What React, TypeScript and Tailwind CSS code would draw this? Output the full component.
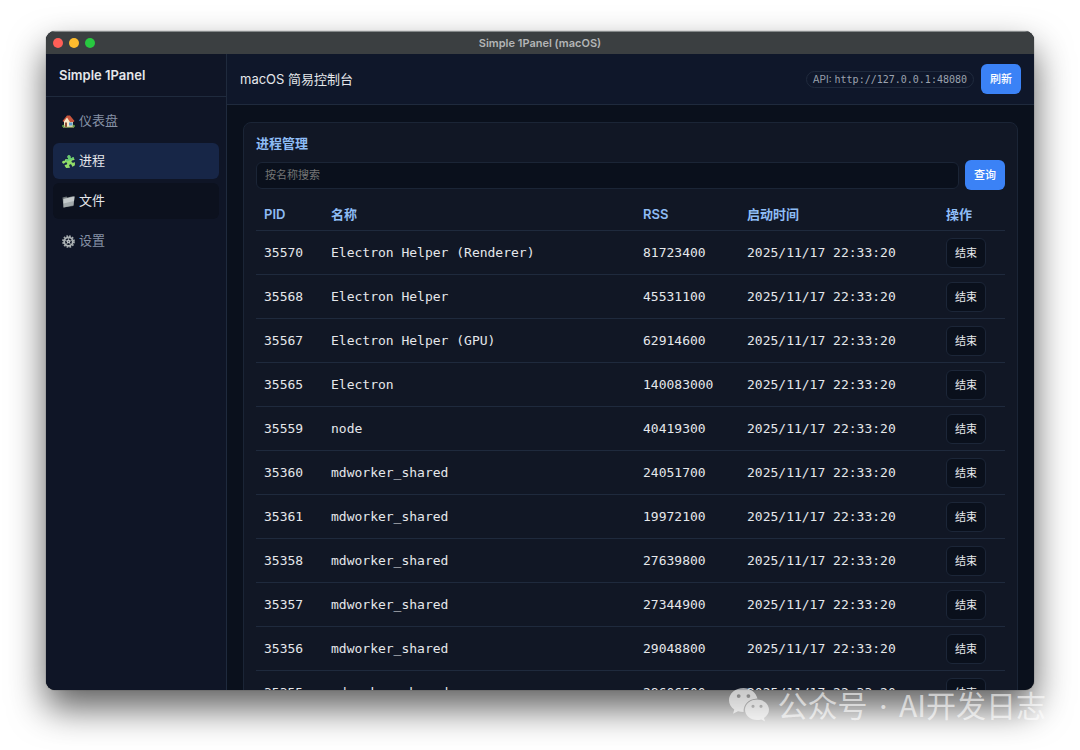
import { useState } from 'react'

interface Process {
  pid: number
  name: string
  rss: number
}

const STARTED_AT = '2025/11/17 22:33:20'

const PROCESSES: Process[] = [
  { pid: 35570, name: 'Electron Helper (Renderer)', rss: 81723400 },
  { pid: 35568, name: 'Electron Helper', rss: 45531100 },
  { pid: 35567, name: 'Electron Helper (GPU)', rss: 62914600 },
  { pid: 35565, name: 'Electron', rss: 140083000 },
  { pid: 35559, name: 'node', rss: 40419300 },
  { pid: 35360, name: 'mdworker_shared', rss: 24051700 },
  { pid: 35361, name: 'mdworker_shared', rss: 19972100 },
  { pid: 35358, name: 'mdworker_shared', rss: 27639800 },
  { pid: 35357, name: 'mdworker_shared', rss: 27344900 },
  { pid: 35356, name: 'mdworker_shared', rss: 29048800 },
  { pid: 35355, name: 'mdworker_shared', rss: 28606500 }
]

function HouseIcon() {
  return (
    <svg className="w-[13px] h-[13px] shrink-0" viewBox="0 0 26 26" aria-hidden="true">
      <path d="M4 11 11 3l11 8v13H4z" fill="#f0dcb8" />
      <path d="M4 12 10 4l4 8v12H4z" fill="#f8e8c8" />
      <path d="M10 1h6l9 11-2 2h-7L10 5 3 14l-2-2z" fill="#c9553c" />
      <rect x="6" y="15" width="4" height="9" fill="#8a4a31" />
      <rect x="14" y="15" width="7" height="6" fill="#5b9cc9" />
      <circle cx="2.500" cy="22" r="2.500" fill="#5c9444" />
      <circle cx="23.500" cy="22" r="2.500" fill="#5c9444" />
      <path d="M2 24.500h22" stroke="#8aa05a" strokeWidth="2" />
    </svg>
  )
}

function PuzzleIcon() {
  return (
    <svg className="w-[13px] h-[13px] shrink-0" viewBox="0 0 26 26" aria-hidden="true">
      <g transform="rotate(-18 13 13)">
        <path
          d="M9 6.500 14 9c1.200-.6 0-2-.2-3.500C13.500 3 15 1 17.200 1.200c2.300.2 3.300 2.600 2.300 4.800-.5 1.200-.8 2.500.5 2.500L25 7.500l.8 5.500c-1 1.300-2.300.4-3.800.2-2.200-.2-3.500 1-3.300 2.800.2 2 2.300 2.800 4 2 1-.4 1.800 0 1.800 1L23 24l-5.500 1.500c-1.300-.7-.5-2-.7-3.500-.3-2-2-3-3.800-2.300-1.800.8-1.800 2.800-.8 4.300.5 1 0 1.700-1 1.700L4.500 24 3 18.500c.5-1.200 2-.6 3.500-.6 2 0 3.200-1.500 2.800-3.200-.5-1.900-2.600-2.300-4.300-1.200C3 14.800.5 14 .3 11.700.1 9.500 2 8.300 4 8.700c1.500.3 3 .5 3.500-.7z"
          fill="#92dc68"
        />
        <path d="M9 6.500 14 9c1.200-.6 0-2-.2-3.500C13.500 3 15 1 17.200 1.200c2.300.2 3.300 2.600 2.300 4.800-.5 1.200-.8 2.500.5 2.500L25 7.500l.5 3C19 11 14 12 9 12z" fill="#66cb74" />
      </g>
    </svg>
  )
}

function FolderIcon() {
  return (
    <svg className="w-[13px] h-[13px] shrink-0" viewBox="0 0 26 26" aria-hidden="true">
      <path d="M1 5 9 3l2 2L23 2v20L3 25z" fill="#6f7679" />
      <path d="M3 8 25 3l-2 17.500L3 25z" fill="#a3aaac" />
      <path d="M3 8 25 3l-1 9-21 5z" fill="#c3c9ca" />
    </svg>
  )
}

function GearIcon() {
  return (
    <svg className="w-[13px] h-[13px] shrink-0" viewBox="0 0 26 26" fill="none" aria-hidden="true">
      <circle cx="13" cy="13" r="11" stroke="#a5abad" strokeWidth="3.500" strokeDasharray="3.450 2.310" />
      <circle cx="13" cy="13" r="8.500" stroke="#b0b6b8" strokeWidth="3.500" />
      <path d="M13 13 13 5M13 13l7.600-2.500M13 13l4.700 6.500M13 13l-4.700 6.500M13 13l-7.600-2.500" stroke="#8f9597" strokeWidth="2.500" />
      <circle cx="13" cy="13" r="3.500" fill="#c6cbcd" />
      <circle cx="13" cy="13" r="1.500" fill="#5b6170" />
    </svg>
  )
}

function WeChatLogo() {
  return (
    <svg className="w-10 h-[34px] shrink-0" viewBox="0 0 40 34" fill="currentColor" aria-hidden="true">
      <path
        fillRule="evenodd"
        d="M14.500 0C6.500 0 0 5.400 0 12.200c0 3.800 2.100 7.200 5.300 9.400L4 25.800l5-2.500c1.700.5 3.600.8 5.600.8C14 17 19.500 11 28.500 10.600 27 4.500 21.300 0 14.500 0ZM9.700 6.200a1.900 1.900 0 1 1 0 3.800 1.900 1.900 0 0 1 0-3.800Zm9.700 0a1.900 1.900 0 1 1 0 3.800 1.900 1.900 0 0 1 0-3.800Z"
      />
      <path
        fillRule="evenodd"
        d="M28 11.500c-6.700 0-12 4.600-12 10.300S21.300 32 28 32c1.500 0 2.900-.2 4.200-.6L36 33.400l-1-3.500c3-1.900 5-4.800 5-8.100 0-5.700-5.300-10.300-12-10.300Zm-4 5.200a1.600 1.600 0 1 1 0 3.200 1.600 1.600 0 0 1 0-3.200Zm8 0a1.600 1.600 0 1 1 0 3.200 1.600 1.600 0 0 1 0-3.200Z"
      />
    </svg>
  )
}

const NAV_ITEMS = [
  { id: 'dashboard', label: '仪表盘', icon: <HouseIcon /> },
  { id: 'processes', label: '进程', icon: <PuzzleIcon /> },
  { id: 'files', label: '文件', icon: <FolderIcon /> },
  { id: 'settings', label: '设置', icon: <GearIcon /> }
]

function navItemStyle(id: string, active: string) {
  if (id === active) return 'bg-[#172647] text-gray-200'
  if (id === 'files') return 'bg-[#0c111e] text-gray-200'
  return 'text-[#8591a5] hover:bg-[#0c111e] hover:text-gray-200'
}

function Sidebar() {
  const [active, setActive] = useState('processes')

  return (
    <aside className="w-[181px] shrink-0 bg-[#0f1526] border-r border-[#1f2a3d]">
      <div className="h-[43px] px-[13px] pt-0.5 flex items-center border-b border-[#1f2a3d] text-[13px] font-semibold text-gray-200">
        Simple 1Panel
      </div>
      <nav className="flex flex-col gap-1 px-[7px] py-[6px]">
        {NAV_ITEMS.map(item => (
          <button
            key={item.id}
            onClick={() => setActive(item.id)}
            className={`h-9 px-[9px] flex items-center gap-1 rounded-md text-[13px] ${navItemStyle(item.id, active)}`}
          >
            {item.icon}
            {item.label}
          </button>
        ))}
      </nav>
    </aside>
  )
}

function ProcessTable({ rows }: { rows: Process[] }) {
  return (
    <table className="w-full table-fixed text-left text-[13px]">
      <thead>
        <tr className="h-8 border-b border-[#1f2a3d] text-[#8ebcf5]">
          <th className="w-[67px] px-2 pt-0.5 font-semibold">PID</th>
          <th className="px-2 pt-0.5 font-semibold">名称</th>
          <th className="w-[104px] px-2 pt-0.5 font-semibold">RSS</th>
          <th className="w-[199px] px-2 pt-0.5 font-semibold">启动时间</th>
          <th className="w-[67px] px-2 pt-0.5 font-semibold">操作</th>
        </tr>
      </thead>
      <tbody className="font-['DejaVu_Sans_Mono',monospace] text-gray-200">
        {rows.map(row => (
          <tr key={row.pid} className="h-11 border-b border-[#1f2a3d]">
            <td className="px-2 pt-0.5">{row.pid}</td>
            <td className="px-2 pt-0.5 truncate">{row.name}</td>
            <td className="px-2 pt-0.5">{row.rss}</td>
            <td className="px-2 pt-0.5 whitespace-nowrap">{STARTED_AT}</td>
            <td className="px-2 pt-0.5">
              <button className="block w-10 h-[30px] rounded-md border border-[#1c2638] bg-[#0a101c] font-['Inter','Noto_Sans_CJK_SC',sans-serif] text-[11px] text-gray-200">
                结束
              </button>
            </td>
          </tr>
        ))}
      </tbody>
    </table>
  )
}

export default function App() {
  const [keyword, setKeyword] = useState('')
  const [query, setQuery] = useState('')

  const rows = PROCESSES.filter(p => p.name.toLowerCase().includes(query.toLowerCase()))

  return (
    <div className="relative h-screen overflow-hidden bg-white px-[46px] pt-[31px] pb-[60px] font-['Inter','Noto_Sans_CJK_SC',sans-serif]">
      <div className="h-full flex flex-col overflow-hidden rounded-[9px] bg-[#0a101c] shadow-[0_18px_36px_rgba(0,0,0,0.63),0_0_1px_rgba(0,0,0,0.8)]">
        {/* Title bar */}
        <div className="h-[23px] shrink-0 grid grid-cols-[1fr_auto_1fr] items-center px-[7px] bg-[#3b3f41] border-t border-[#85898a]">
          <div className="flex gap-[6px]">
            <span className="size-[10px] rounded-full bg-[#ff5f57]" />
            <span className="size-[10px] rounded-full bg-[#febc2e]" />
            <span className="size-[10px] rounded-full bg-[#28c840]" />
          </div>
          <span className="text-[11px] font-semibold text-[#b3b5b6]">Simple 1Panel (macOS)</span>
        </div>

        <div className="flex flex-1 min-h-0">
          <Sidebar />

          <div className="flex flex-1 min-w-0 flex-col">
            <header className="h-[51px] shrink-0 flex items-center gap-[7px] px-[13px] bg-[#0f172a] border-b border-[#1f2a3d]">
              <h1 className="mr-auto pt-0.5 text-[13px] text-gray-200">macOS 简易控制台</h1>
              <div className="h-[17px] px-[6px] flex items-center gap-[3px] rounded-full border border-[#1f2a3d] text-[10px] text-[#9ca3af]">
                API: <span className="font-['DejaVu_Sans_Mono',monospace]">http://127.0.0.1:48080</span>
              </div>
              <button className="w-10 h-[30px] rounded-md bg-[#3b82f6] text-[11px] font-medium text-white">
                刷新
              </button>
            </header>

            <main className="flex-1 min-h-0 overflow-hidden px-4 pt-[17px]">
              <section className="rounded-lg border border-[#1b2536] bg-[#111725] px-3 pt-[11px] pb-4">
                <h2 className="text-[13px] leading-[18px] font-bold text-[#8ebcf5]">进程管理</h2>
                <form
                  className="mt-2 mb-2 flex items-center gap-[6px]"
                  onSubmit={e => {
                    e.preventDefault()
                    setQuery(keyword)
                  }}
                >
                  <input
                    type="text"
                    value={keyword}
                    onChange={e => setKeyword(e.target.value)}
                    placeholder="按名称搜索"
                    aria-label="按名称搜索"
                    className="h-[27px] min-w-0 flex-1 rounded-md border border-[#1b2536] bg-[#0a101c] px-2 text-[11px] text-gray-200 placeholder:text-[#757575] outline-none"
                  />
                  <button type="submit" className="w-10 h-[30px] rounded-md bg-[#3b82f6] text-[11px] font-medium text-white">
                    查询
                  </button>
                </form>
                <ProcessTable rows={rows} />
              </section>
            </main>
          </div>
        </div>
      </div>

      {/* Watermark */}
      <div className="absolute right-[34px] bottom-[22px] flex items-center gap-2 text-white/60">
        <WeChatLogo />
        <span className="font-['Noto_Sans_CJK_SC',sans-serif] text-[30px] leading-[44px] whitespace-nowrap">
          公众号<span className="px-[3px] font-['Inter',sans-serif]"> · </span>AI开发日志
        </span>
      </div>
    </div>
  )
}
